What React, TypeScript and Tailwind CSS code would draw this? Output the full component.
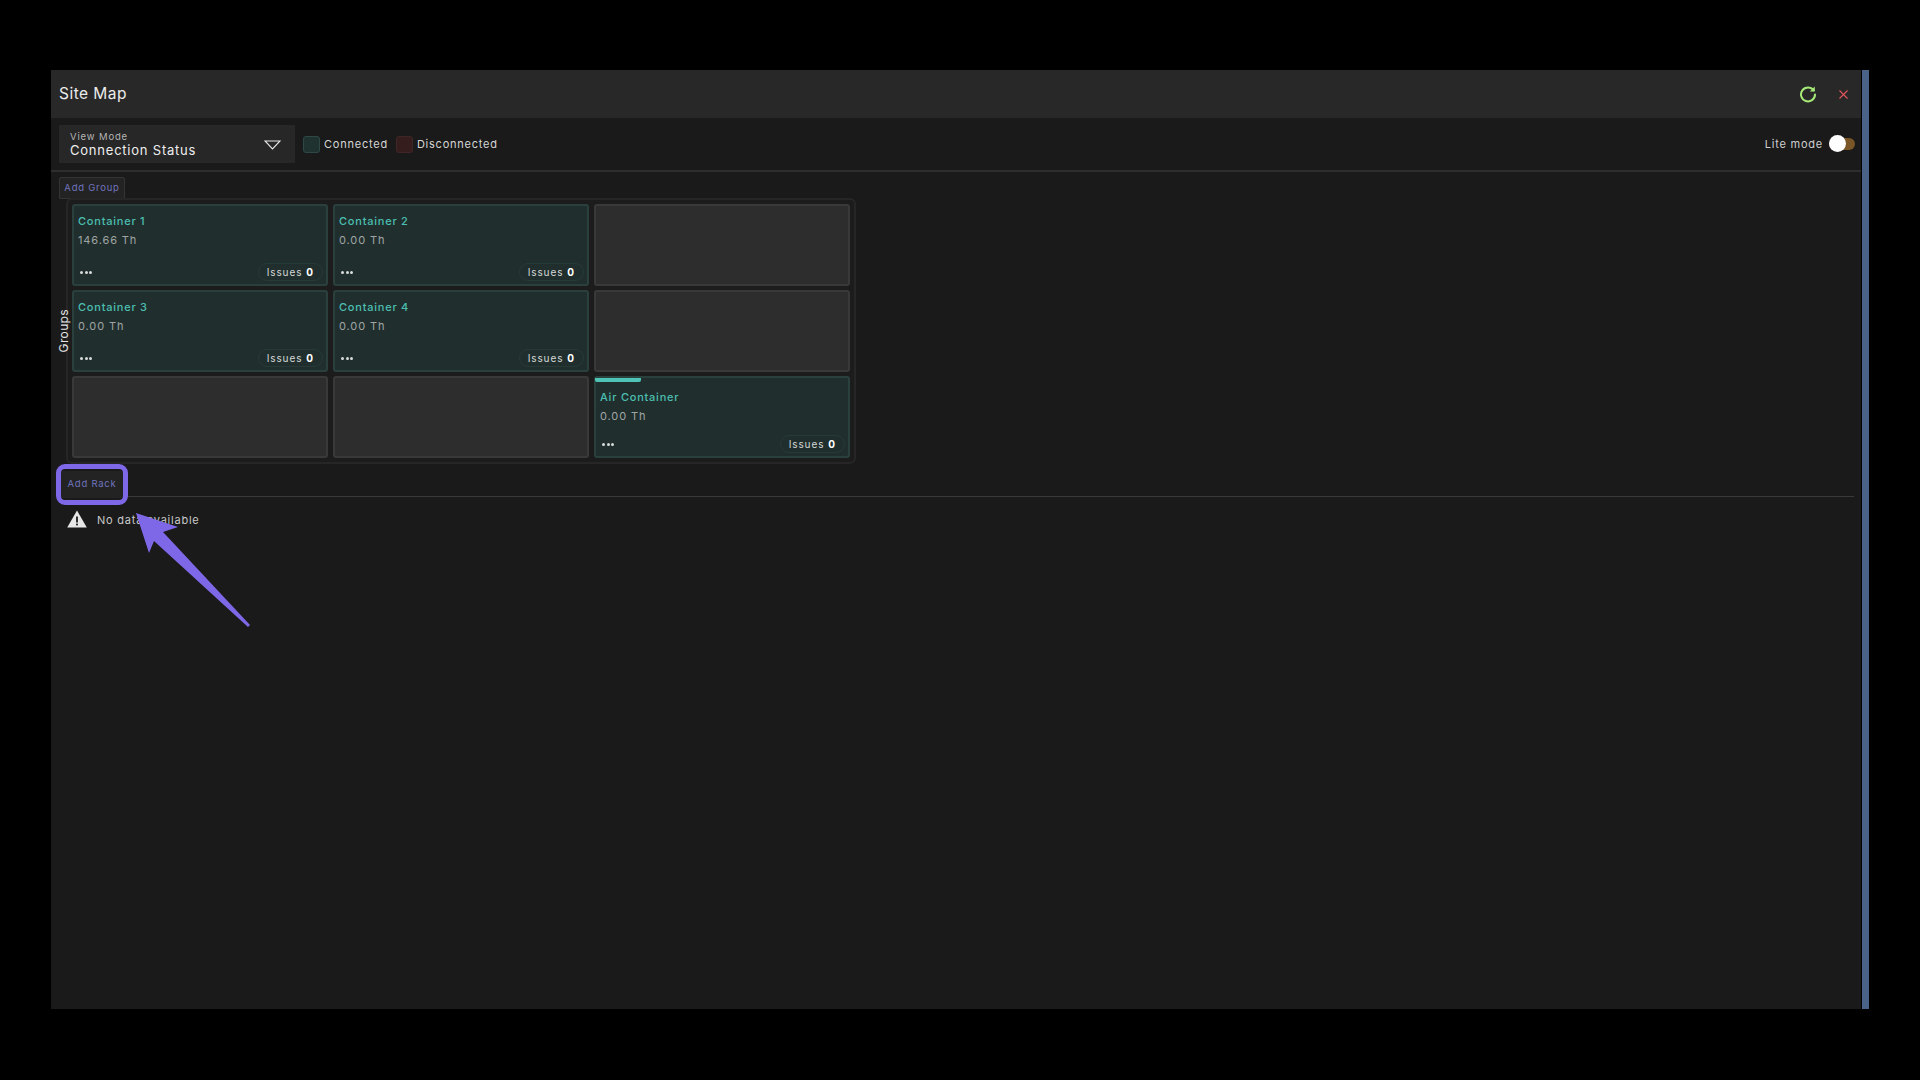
import { X } from "lucide-react";

const font = { fontFamily: "Inter, 'Noto Sans', sans-serif" };

type Rack = { name: string; value: string; bar?: boolean };

const cells: (Rack | null)[] = [
  { name: "Container 1", value: "146.66 Th" },
  { name: "Container 2", value: "0.00 Th" },
  null,
  { name: "Container 3", value: "0.00 Th" },
  { name: "Container 4", value: "0.00 Th" },
  null,
  null,
  null,
  { name: "Air Container", value: "0.00 Th", bar: true },
];

function RackCard({ rack }: { rack: Rack | null }) {
  if (!rack) {
    return <div className="h-[82px] rounded-[3px] border-2 border-[#393939] bg-[#2d2d2d]" />;
  }
  return (
    <div className="flex h-[82px] flex-col rounded-[3px] border-2 border-[#2a403d] bg-[#202f2e] px-[4px] pb-[3px]">
      {rack.bar && <div className="-ml-[5px] h-[4px] w-[46px] rounded-b-[2px] bg-[#4fc4b6]" />}
      <div className="mt-[7px] text-[11px] font-medium leading-[16px] tracking-[0.07em] text-[#4cbfb1]">
        {rack.name}
      </div>
      <div className="mt-[3px] text-[11px] leading-[16px] tracking-[0.08em] text-[#a0a5a4]">{rack.value}</div>
      <div className="mt-auto flex items-center justify-between">
        <div className="ml-[2px] flex gap-[1.5px]">
          <span className="h-[3px] w-[3px] rounded-full bg-[#d8dcdb]" />
          <span className="h-[3px] w-[3px] rounded-full bg-[#d8dcdb]" />
          <span className="h-[3px] w-[3px] rounded-full bg-[#d8dcdb]" />
        </div>
        <div className="-mr-[1px] flex h-[18px] items-center gap-[4px] rounded-full border border-[#263a38] px-[8px] text-[10px] tracking-[0.09em] text-[#d5d8d7]">
          Issues <b className="font-bold text-white">0</b>
        </div>
      </div>
    </div>
  );
}

export default function App() {
  return (
    <div className="relative h-[1080px] w-full overflow-hidden bg-black pl-[51px] pt-[70px]" style={font}>
      <div className="flex h-[939px]">
        <div className="flex w-[1810px] flex-col bg-[#1a1a1a]">
          <div className="flex h-[48px] items-center justify-between bg-[#282828] pl-[8px] pr-[10px]">
            <span className="text-[15.5px] tracking-[0.03em] text-[#ececec]">Site Map</span>
            <div className="flex items-center gap-[19px]">
              <svg width="18" height="18" viewBox="0 0 18 18" fill="none">
                <path d="M14.6 5.2A7 7 0 1 0 16 9.6" stroke="#a5e878" strokeWidth="2" strokeLinecap="round" />
                <path d="M15.8 1.6v5h-5z" fill="#a5e878" />
              </svg>
              <X size={15} strokeWidth={1.75} className="text-[#e2565c]" />
            </div>
          </div>

          <div className="flex h-[54px] items-center border-b-2 border-[#2e2e2e] pl-[8px] pr-[6px]">
            <div className="flex h-[38px] w-[236px] items-center justify-between bg-[#272727] pl-[11px] pr-[14px]">
              <div className="mt-[2px] flex flex-col">
                <span className="text-[9.5px] leading-[11px] tracking-[0.09em] text-[#b4b4b4]">View Mode</span>
                <span className="text-[13px] leading-[17px] tracking-[0.06em] text-[#eeeeee]">Connection Status</span>
              </div>
              <svg width="17" height="10" viewBox="0 0 17 10" className="mt-[2px]">
                <path d="M1 1h15L8.5 9z" fill="none" stroke="#e8e8e8" strokeWidth="1.1" />
              </svg>
            </div>
            <div className="ml-[8px] h-[17px] w-[17px] rounded-[3px] border border-[#2e4845] bg-[#1f3230]" />
            <span className="ml-[4px] text-[11px] tracking-[0.07em] text-[#d6d6d6]">Connected</span>
            <div className="ml-[8px] h-[17px] w-[17px] rounded-[3px] border border-[#402626] bg-[#361d1d]" />
            <span className="ml-[4px] text-[11px] tracking-[0.07em] text-[#d6d6d6]">Disconnected</span>
            <span className="ml-auto text-[11px] tracking-[0.07em] text-[#cfcfcf]">Lite mode</span>
            <div className="relative ml-[6px] h-[12px] w-[26px] rounded-full bg-[#7a5526]">
              <span className="absolute left-[0px] top-[-3px] h-[17px] w-[17px] rounded-full bg-white" />
            </div>
          </div>

          <div className="pl-[8px] pt-[5px]">
            <button className="flex h-[22px] w-[66px] items-center justify-center rounded-t-[2px] border border-[#343434] bg-[#232323] text-[9.5px] tracking-[0.08em] text-[#6f74bf]">
              Add Group
            </button>
          </div>

          <div className="-mt-[1px] flex items-center pl-[7px]">
            <div className="flex w-[8px] justify-start">
              <span className="rotate-180 text-[12px] leading-[12px] tracking-[0.03em] text-[#e4e4e4] [writing-mode:vertical-rl]">
                Groups
              </span>
            </div>
            <div className="grid w-[790px] grid-cols-3 gap-x-[5px] gap-y-[4px] rounded-[6px] border-2 border-[#262626] bg-[#1c1c1c] p-[4px]">
              {cells.map((cell, i) => (
                <RackCard key={i} rack={cell} />
              ))}
            </div>
          </div>

          <div className="mx-[7px] mt-[7px] h-[26px] border-b border-[#3a3a3a] pl-[1px]">
            <button className="relative flex h-[27px] w-[66px] items-center justify-center bg-[#232323] text-[9.5px] tracking-[0.08em] text-[#6f74bf]">
              Add Rack
              <span className="absolute -bottom-[7px] -left-[3px] -right-[3px] -top-[7px] rounded-[9px] border-[5px] border-[#7f68e8]" />
            </button>
          </div>

          <div className="mt-[15px] flex items-center gap-[10px] pl-[16px]">
            <svg width="20" height="18" viewBox="0 0 20 18" className="-mt-[2px]">
              <path d="M10 0.5 19.8 17.5H0.2z" fill="#e6e6e6" />
              <rect x="9.1" y="6.5" width="1.8" height="6" fill="#1a1a1a" />
              <rect x="9.1" y="13.6" width="1.8" height="1.8" fill="#1a1a1a" />
            </svg>
            <span className="text-[11px] tracking-[0.07em] text-[#c9c9c9]">No data available</span>
          </div>
        </div>
        <div className="ml-[1px] w-[7px] bg-[#4a6287]" />
      </div>

      <svg className="pointer-events-none absolute left-0 top-0" width="1920" height="1080" viewBox="0 0 1920 1080">
        <path d="M136 513 178 527 163 532 250 625 248 627 154 541 149 553z" fill="#7f68e8" />
      </svg>
    </div>
  );
}
